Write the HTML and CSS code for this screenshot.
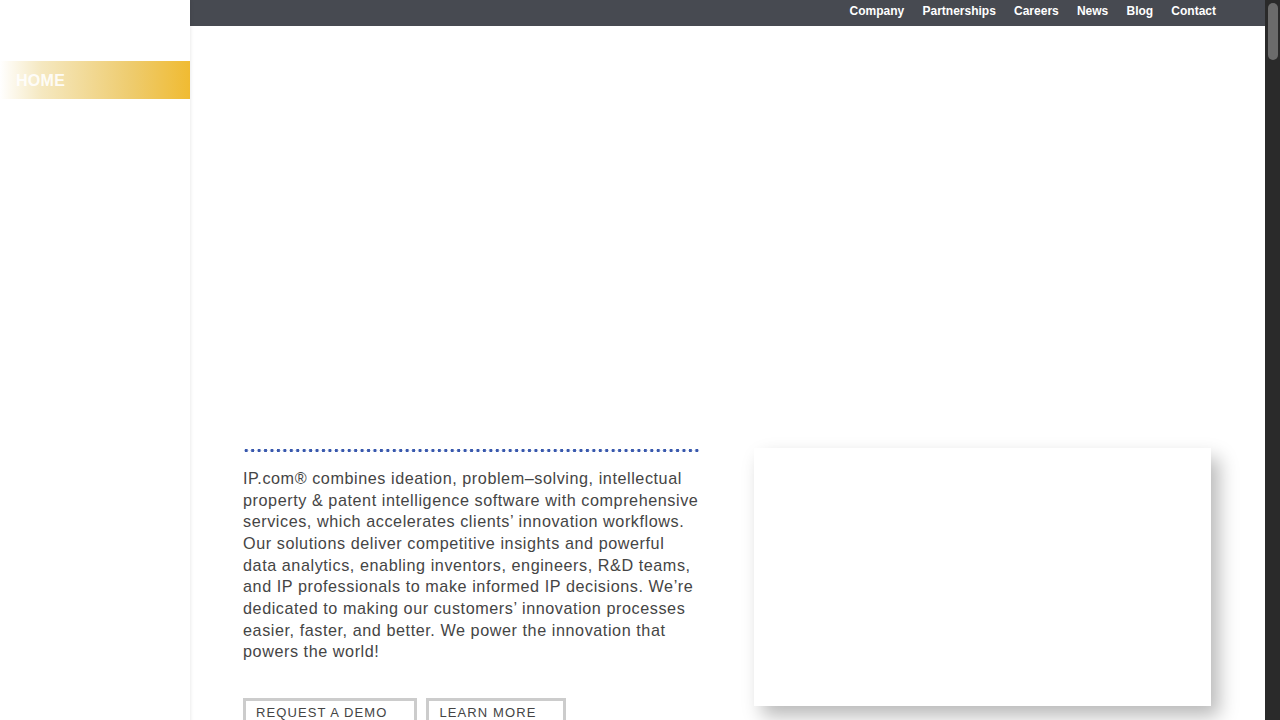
FILE: index.html
```html
<!DOCTYPE html>
<html lang="en">
<head>
    <meta charset="UTF-8">
    <meta name="viewport" content="width=device-width, initial-scale=1.0">
    <title>IP.com</title>
    <link rel="stylesheet" href="styles.css">
</head>
<body>
    <div class="page">
        <aside class="sidebar">
            <a class="side-link active" href="#">HOME</a>
        </aside>
        <div class="main">
            <nav class="topbar">
                <a href="#">Company</a>
                <a href="#">Partnerships</a>
                <a href="#">Careers</a>
                <a href="#">News</a>
                <a href="#">Blog</a>
                <a href="#">Contact</a>
            </nav>
            <div class="hero"></div>
            <section class="intro">
                <div class="intro-text">
                    <div class="dots"></div>
                    <p>IP.com® combines ideation, problem–solving, intellectual property &amp; patent intelligence software with comprehensive services, which accelerates clients’ innovation workflows. Our solutions deliver competitive insights and powerful data analytics, enabling inventors, engineers, R&amp;D teams, and IP professionals to make informed IP decisions. We’re dedicated to making our customers’ innovation processes easier, faster, and better. We power the innovation that powers the world!</p>
                    <div class="buttons">
                        <a class="btn" href="#">REQUEST A DEMO</a>
                        <a class="btn" href="#">LEARN MORE</a>
                    </div>
                </div>
                <div class="video-box"></div>
            </section>
        </div>
        <!-- dark scroll track, drawn since the window hides its own -->
        <div class="scroll-track"><div class="scroll-thumb"></div></div>
    </div>
</body>
</html>
```

FILE: styles.css
```css
body {
    margin: 0;
    font-family: "Liberation Sans", Arial, sans-serif;
    color: #444;
    background-color: #fff;
}
a {
    text-decoration: none;
}
.page {
    display: flex;
    min-height: 1400px;
    padding-right: 15px;
}
.sidebar {
    width: 190px;
    flex-shrink: 0;
    padding-top: 61px;
    box-shadow: 1px 0 3px rgba(0, 0, 0, 0.08);
    position: relative;
    z-index: 1;
}
.side-link {
    display: block;
    height: 38px;
    line-height: 40px;
    padding-left: 16px;
    color: rgba(255, 255, 255, 0.9);
    font-size: 16px;
    font-weight: bold;
    letter-spacing: 0.3px;
    background: linear-gradient(to right, #fff 0%, #f5e8c0 22%, #eecb6c 70%, #f0bb32 100%);
}
.main {
    flex: 1;
    min-width: 0;
}
.topbar {
    height: 26px;
    background-color: #474a51;
    display: flex;
    justify-content: flex-end;
    align-items: center;
    gap: 18.2px;
    padding: 0 49px 4px 0;
    box-sizing: border-box;
}
.topbar a {
    color: #fff;
    font-size: 12px;
    font-weight: bold;
}
.hero {
    height: 422px;
}
.intro {
    display: grid;
    grid-template-columns: 458px 457px;
    column-gap: 53px;
    padding: 0 54px 0 53px;
}
.dots {
    height: 5px;
    background-image: radial-gradient(circle, #3858ad 1.5px, transparent 2px);
    background-size: 6.45px 5px;
    background-repeat: repeat-x;
}
.intro-text p {
    margin: 15px 0 0;
    font-size: 16.2px;
    line-height: 21.65px;
    letter-spacing: 0.56px;
    color: #454545;
}
.buttons {
    display: flex;
    gap: 9px;
    margin-top: 35px;
}
.btn {
    border: 3px solid #ccc;
    padding: 4px 27px 4px 10px;
    color: #444;
    font-size: 13px;
    letter-spacing: 1.1px;
}
.video-box {
    height: 258px;
    background-color: #fff;
    box-shadow: 8px 10px 18px rgba(0, 0, 0, 0.28);
}
.scroll-track {
    position: fixed;
    top: 0;
    right: 0;
    bottom: 0;
    width: 15px;
    background-color: #2a2a2a;
}
.scroll-thumb {
    margin: 3px 2px 0 3px;
    height: 57px;
    border-radius: 5px;
    background-color: #6b6b6b;
}
```
